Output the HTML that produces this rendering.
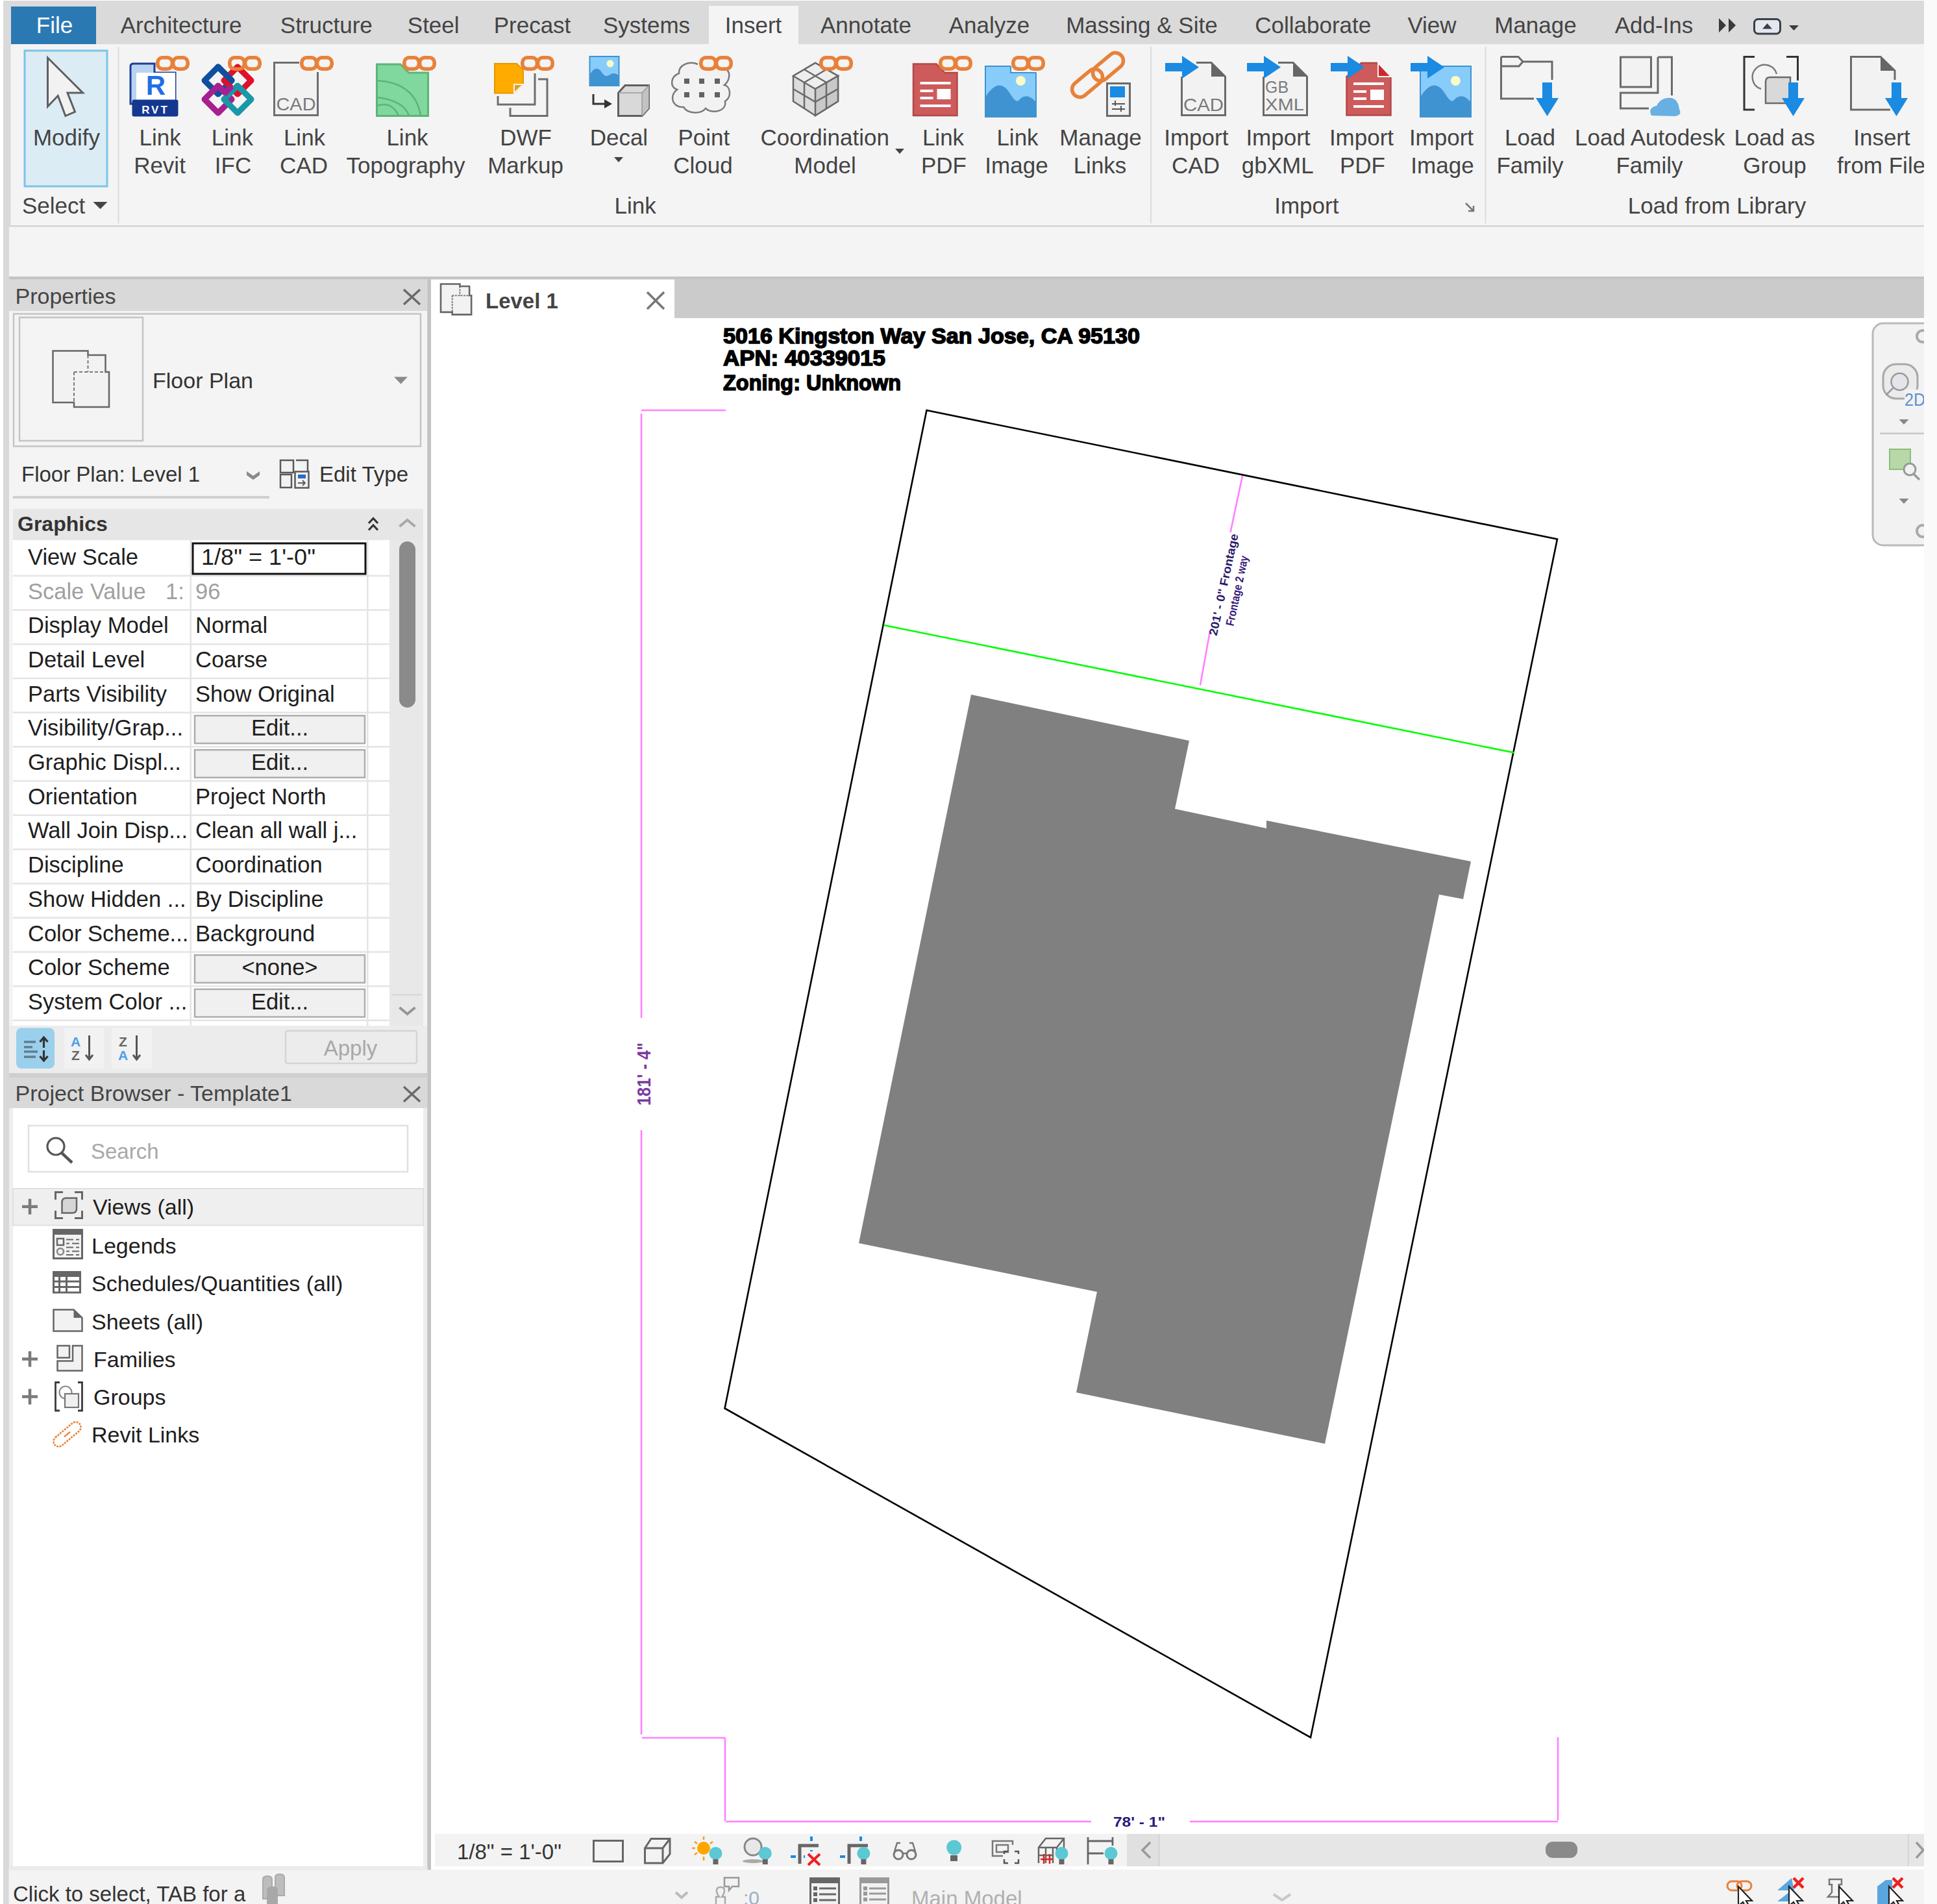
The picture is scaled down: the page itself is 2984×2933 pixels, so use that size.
<!DOCTYPE html>
<html><head><meta charset="utf-8"><style>
html,body{margin:0;padding:0;width:2984px;height:2933px;overflow:hidden;background:#fff}
svg{display:block;font-family:"Liberation Sans",sans-serif}
</style></head><body>
<svg width="2984" height="2933" viewBox="0 0 2984 2933">
<rect x="0" y="0" width="2984" height="2933" fill="#ffffff" />
<rect x="2964" y="0" width="20" height="2933" fill="#fafafa" />
<rect x="5" y="1" width="2959" height="2932" fill="#d9d9d9" />
<rect x="5" y="1" width="2959" height="67" fill="#dadada" />
<rect x="17" y="10" width="131" height="58" fill="#2b79b3" />
<rect x="1092" y="9" width="138" height="60" fill="#f4f4f4" />
<text x="84" y="50.5" font-size="35" fill="#ffffff" text-anchor="middle" font-weight="normal" >File</text>
<text x="279.0" y="50.5" font-size="35" fill="#444444" text-anchor="middle" font-weight="normal" >Architecture</text>
<text x="502.8" y="50.5" font-size="35" fill="#444444" text-anchor="middle" font-weight="normal" >Structure</text>
<text x="667.7" y="50.5" font-size="35" fill="#444444" text-anchor="middle" font-weight="normal" >Steel</text>
<text x="820.0" y="50.5" font-size="35" fill="#444444" text-anchor="middle" font-weight="normal" >Precast</text>
<text x="996.0" y="50.5" font-size="35" fill="#444444" text-anchor="middle" font-weight="normal" >Systems</text>
<text x="1160.5500000000002" y="50.5" font-size="35" fill="#444444" text-anchor="middle" font-weight="normal" >Insert</text>
<text x="1334.0" y="50.5" font-size="35" fill="#444444" text-anchor="middle" font-weight="normal" >Annotate</text>
<text x="1524.0" y="50.5" font-size="35" fill="#444444" text-anchor="middle" font-weight="normal" >Analyze</text>
<text x="1758.9" y="50.5" font-size="35" fill="#444444" text-anchor="middle" font-weight="normal" >Massing &amp; Site</text>
<text x="2022.7" y="50.5" font-size="35" fill="#444444" text-anchor="middle" font-weight="normal" >Collaborate</text>
<text x="2206.0" y="50.5" font-size="35" fill="#444444" text-anchor="middle" font-weight="normal" >View</text>
<text x="2365.5" y="50.5" font-size="35" fill="#444444" text-anchor="middle" font-weight="normal" >Manage</text>
<text x="2548.0" y="50.5" font-size="35" fill="#444444" text-anchor="middle" font-weight="normal" >Add-Ins</text>
<path d="M2648,28 L2659,39 L2648,50 Z M2663,28 L2674,39 L2663,50 Z" fill="#3a3a3a"/>
<rect x="2702.5" y="29.5" width="40" height="22.5" fill="#e4e7ee" stroke="#3a3f48" stroke-width="3" rx="6" />
<path d="M2715,44.5 L2730,44.5 L2722.5,36 Z" fill="#3a3f48"/>
<path d="M2756.0,39.0 L2771.0,39.0 L2763.5,47.0 Z" fill="#3a3a3a"/>
<rect x="16.5" y="68" width="2947.5" height="279.5" fill="#f4f4f4" />
<rect x="16.5" y="347" width="2947.5" height="2.5" fill="#d4d4d4" />
<rect x="181.5" y="72" width="2" height="272" fill="#dcdcdc" />
<rect x="1772" y="72" width="2" height="272" fill="#dcdcdc" />
<rect x="2287.5" y="72" width="2" height="272" fill="#dcdcdc" />
<rect x="38" y="78" width="127" height="209" fill="#dcecf5" stroke="#7cc4e8" stroke-width="3" />
<text x="102.5" y="223.7" font-size="35" fill="#444444" text-anchor="middle" font-weight="normal" >Modify</text>
<text x="246.7" y="223.7" font-size="35" fill="#444444" text-anchor="middle" font-weight="normal" >Link</text>
<text x="246" y="267" font-size="35" fill="#444444" text-anchor="middle" font-weight="normal" >Revit</text>
<text x="357.8" y="223.7" font-size="35" fill="#444444" text-anchor="middle" font-weight="normal" >Link</text>
<text x="359" y="267" font-size="35" fill="#444444" text-anchor="middle" font-weight="normal" >IFC</text>
<text x="469" y="223.7" font-size="35" fill="#444444" text-anchor="middle" font-weight="normal" >Link</text>
<text x="468" y="267" font-size="35" fill="#444444" text-anchor="middle" font-weight="normal" >CAD</text>
<text x="627.5" y="223.7" font-size="35" fill="#444444" text-anchor="middle" font-weight="normal" >Link</text>
<text x="625" y="267" font-size="35" fill="#444444" text-anchor="middle" font-weight="normal" >Topography</text>
<text x="810" y="223.7" font-size="35" fill="#444444" text-anchor="middle" font-weight="normal" >DWF</text>
<text x="809.5" y="267" font-size="35" fill="#444444" text-anchor="middle" font-weight="normal" >Markup</text>
<text x="953.4" y="223.7" font-size="35" fill="#444444" text-anchor="middle" font-weight="normal" >Decal</text>
<path d="M946.0,242.0 L960.0,242.0 L953,250.0 Z" fill="#444444"/>
<text x="1084.4" y="223.7" font-size="35" fill="#444444" text-anchor="middle" font-weight="normal" >Point</text>
<text x="1083" y="267" font-size="35" fill="#444444" text-anchor="middle" font-weight="normal" >Cloud</text>
<text x="1270.7" y="223.7" font-size="35" fill="#444444" text-anchor="middle" font-weight="normal" >Coordination</text>
<text x="1271" y="267" font-size="35" fill="#444444" text-anchor="middle" font-weight="normal" >Model</text>
<path d="M1379.0,229.0 L1393.0,229.0 L1386,237.0 Z" fill="#444444"/>
<text x="1453" y="223.7" font-size="35" fill="#444444" text-anchor="middle" font-weight="normal" >Link</text>
<text x="1454" y="267" font-size="35" fill="#444444" text-anchor="middle" font-weight="normal" >PDF</text>
<text x="1567.5" y="223.7" font-size="35" fill="#444444" text-anchor="middle" font-weight="normal" >Link</text>
<text x="1566" y="267" font-size="35" fill="#444444" text-anchor="middle" font-weight="normal" >Image</text>
<text x="1695.6" y="223.7" font-size="35" fill="#444444" text-anchor="middle" font-weight="normal" >Manage</text>
<text x="1694.5" y="267" font-size="35" fill="#444444" text-anchor="middle" font-weight="normal" >Links</text>
<text x="1842.8" y="223.7" font-size="35" fill="#444444" text-anchor="middle" font-weight="normal" >Import</text>
<text x="1842" y="267" font-size="35" fill="#444444" text-anchor="middle" font-weight="normal" >CAD</text>
<text x="1969" y="223.7" font-size="35" fill="#444444" text-anchor="middle" font-weight="normal" >Import</text>
<text x="1968.3" y="267" font-size="35" fill="#444444" text-anchor="middle" font-weight="normal" >gbXML</text>
<text x="2097.5" y="223.7" font-size="35" fill="#444444" text-anchor="middle" font-weight="normal" >Import</text>
<text x="2099" y="267" font-size="35" fill="#444444" text-anchor="middle" font-weight="normal" >PDF</text>
<text x="2220.5" y="223.7" font-size="35" fill="#444444" text-anchor="middle" font-weight="normal" >Import</text>
<text x="2222" y="267" font-size="35" fill="#444444" text-anchor="middle" font-weight="normal" >Image</text>
<text x="2357" y="223.7" font-size="35" fill="#444444" text-anchor="middle" font-weight="normal" >Load</text>
<text x="2357" y="267" font-size="35" fill="#444444" text-anchor="middle" font-weight="normal" >Family</text>
<text x="2541.8" y="223.7" font-size="35" fill="#444444" text-anchor="middle" font-weight="normal" >Load Autodesk</text>
<text x="2541" y="267" font-size="35" fill="#444444" text-anchor="middle" font-weight="normal" >Family</text>
<text x="2733.7" y="223.7" font-size="35" fill="#444444" text-anchor="middle" font-weight="normal" >Load as</text>
<text x="2734" y="267" font-size="35" fill="#444444" text-anchor="middle" font-weight="normal" >Group</text>
<text x="2899" y="223.7" font-size="35" fill="#444444" text-anchor="middle" font-weight="normal" >Insert</text>
<text x="2830" y="267" font-size="35" fill="#444444" text-anchor="start" font-weight="normal" >from File</text>
<text x="34" y="329" font-size="35" fill="#444444" text-anchor="start" font-weight="normal" >Select</text>
<path d="M143.5,311.0 L165.5,311.0 L154.5,322.0 Z" fill="#444444"/>
<text x="978.7" y="329" font-size="35" fill="#444444" text-anchor="middle" font-weight="normal" >Link</text>
<text x="2012.8" y="329" font-size="35" fill="#444444" text-anchor="middle" font-weight="normal" >Import</text>
<text x="2645" y="329" font-size="35" fill="#444444" text-anchor="middle" font-weight="normal" >Load from Library</text>
<path d="M2258,313 L2270,325 M2262,325 L2270,325 L2270,317" stroke="#777" stroke-width="2.5" fill="none"/>
<path d="M73.5,89 L73.5,164 L89.3,147.5 L100.8,178.6 L115.5,172.3 L104,143 L127.6,143 Z" fill="#f2f2f2" stroke="#606060" stroke-width="3" stroke-linejoin="miter"/>
<path d="M201,102 Q201,98 206,98 L238,98 L238,112 L270,112 L270,160 L201,160 Z" fill="#b9d3f3" stroke="#1c3f94" stroke-width="3"/>
<rect x="210" y="112" width="60" height="44" fill="#ffffff" />
<rect x="203.5" y="153.5" width="71" height="26" fill="#14388f" rx="3" />
<text x="240" y="146" font-size="42" fill="#1f6fe5" text-anchor="middle" font-weight="bold" >R</text>
<text x="239.5" y="174.5" font-size="17" fill="#ffffff" text-anchor="middle" font-weight="bold" letter-spacing="3">RVT</text>
<rect x="242.8" y="88.8" width="22.6" height="17.4" rx="7.5" fill="none" stroke="#e8813a" stroke-width="5.6"/>
<rect x="266.6" y="88.8" width="22.6" height="17.4" rx="7.5" fill="none" stroke="#e8813a" stroke-width="5.6"/>
<path d="M336,103 L357,124 L336,145 L315,124 Z" fill="none" stroke="#0f4fa0" stroke-width="9" stroke-linejoin="round"/>
<path d="M366,103 L387,124 L366,145 L345,124 Z" fill="none" stroke="#e0102a" stroke-width="9" stroke-linejoin="round"/>
<path d="M336,132 L357,153 L336,174 L315,153 Z" fill="none" stroke="#a81f90" stroke-width="9" stroke-linejoin="round"/>
<path d="M366,132 L387,153 L366,174 L345,153 Z" fill="none" stroke="#1898a8" stroke-width="9" stroke-linejoin="round"/>
<path d="M336,103 L357,124" stroke="#0f4fa0" stroke-width="9" stroke-linecap="round"/>
<path d="M345,145 L357,133" stroke="#a81f90" stroke-width="9"/>
<rect x="353.8" y="88.8" width="22.6" height="17.4" rx="7.5" fill="none" stroke="#e8813a" stroke-width="5.6"/>
<rect x="377.6" y="88.8" width="22.6" height="17.4" rx="7.5" fill="none" stroke="#e8813a" stroke-width="5.6"/>
<path d="M461,96.5 L422.5,96.5 L422.5,177.5 L489.5,177.5 L489.5,111" fill="#f2f2f2" stroke="#6e6e6e" stroke-width="3"/>
<text x="456" y="170" font-size="28" fill="#7a7a7a" text-anchor="middle" font-weight="normal" textLength="61" lengthAdjust="spacingAndGlyphs">CAD</text>
<rect x="464.8" y="88.8" width="22.6" height="17.4" rx="7.5" fill="none" stroke="#e8813a" stroke-width="5.6"/>
<rect x="488.6" y="88.8" width="22.6" height="17.4" rx="7.5" fill="none" stroke="#e8813a" stroke-width="5.6"/>
<path d="M580.5,99 L617,99 L630,112 L659.5,112 L659.5,178.5 L580.5,178.5 Z" fill="#80d89e" stroke="#5cb479" stroke-width="3"/>
<path d="M581,124 Q640,128 648,178 M581,150 Q622,155 630,178 M581,163 Q603,155 614,178" fill="none" stroke="#5cb479" stroke-width="2.5"/>
<rect x="622.8" y="88.8" width="22.6" height="17.4" rx="7.5" fill="none" stroke="#e8813a" stroke-width="5.6"/>
<rect x="646.6" y="88.8" width="22.6" height="17.4" rx="7.5" fill="none" stroke="#e8813a" stroke-width="5.6"/>
<path d="M767,148 L767,161 L824,161 L824,113" fill="none" stroke="#6e6e6e" stroke-width="3"/>
<path d="M786,166 L786,178.5 L843,178.5 L843,122 L829,122" fill="none" stroke="#6e6e6e" stroke-width="3"/>
<path d="M762,98 L796,98 L806,108 L806,130 L792,143.5 L762,143.5 Z" fill="#ffab00" stroke="#e39a00" stroke-width="2"/>
<path d="M792,130 L806,130 L792,143.5 Z" fill="#e0a020" stroke="#f4f4f4" stroke-width="2"/>
<rect x="804.8" y="88.8" width="22.6" height="17.4" rx="7.5" fill="none" stroke="#e8813a" stroke-width="5.6"/>
<rect x="828.6" y="88.8" width="22.6" height="17.4" rx="7.5" fill="none" stroke="#e8813a" stroke-width="5.6"/>
<rect x="908.5" y="87" width="45" height="45" fill="#88ccfb" stroke="#3f93d0" stroke-width="2" />
<path d="M909,114 Q918,100 926,110 Q932,120 938,116 Q945,110 953,116 L953,131.5 L909,131.5 Z" fill="#3f93d0"/>
<circle cx="940" cy="98" r="5.5" fill="#fbfbc8"/>
<path d="M914,145 L914,160 L933,160" fill="none" stroke="#333" stroke-width="3"/>
<path d="M931,153 L943,160 L931,167 Z" fill="#333"/>
<path d="M952.5,143 L963,131.5 L999.5,131.5 L999.5,167 L989,178.5 L952.5,178.5 Z" fill="#d9d9d9" stroke="#5f5f5f" stroke-width="3"/>
<path d="M989,143 L999.5,131.5 L999.5,167 L989,178.5 Z" fill="#c2c2c2"/>
<path d="M952.5,143 L989,143 L999.5,131.5 M989,143 L989,178.5" fill="none" stroke="#9a9a9a" stroke-width="1.5"/>
<path d="M1075,99 C1062,93 1045,100 1046,113 C1032,118 1032,135 1043,138 C1030,148 1036,166 1053,165 C1060,176 1080,176 1087,167 C1096,176 1120,172 1117,156 C1128,149 1125,133 1116,131 C1126,122 1124,111 1120,108" fill="#f2f2f2" stroke="#7a7a7a" stroke-width="2.5"/>
<rect x="1054" y="121" width="8" height="8" fill="#626262" />
<rect x="1054" y="142" width="8" height="8" fill="#626262" />
<rect x="1077" y="121" width="8" height="8" fill="#626262" />
<rect x="1077" y="142" width="8" height="8" fill="#626262" />
<rect x="1101" y="121" width="8" height="8" fill="#626262" />
<rect x="1101" y="142" width="8" height="8" fill="#626262" />
<rect x="1079.8" y="88.8" width="22.6" height="17.4" rx="7.5" fill="none" stroke="#e8813a" stroke-width="5.6"/>
<rect x="1103.6" y="88.8" width="22.6" height="17.4" rx="7.5" fill="none" stroke="#e8813a" stroke-width="5.6"/>
<path d="M1222,117 L1256,97 L1291,117 L1291,156 L1256,178 L1222,156 Z" fill="#dcdcdc" stroke="#6a6a6a" stroke-width="2.5"/>
<path d="M1222,117 L1256,137 L1291,117 L1256,97 Z" fill="#eeeeee" stroke="#6a6a6a" stroke-width="2.5"/>
<path d="M1256,137 L1291,117 L1291,156 L1256,178 Z" fill="#c9c9c9" stroke="#6a6a6a" stroke-width="2.5"/>
<path d="M1239,107 L1273,127 M1273,107 L1239,127 M1239,127 L1239,168 M1273,127 L1273,168 M1222,137 L1256,157 L1291,137" fill="none" stroke="#6a6a6a" stroke-width="2.5"/>
<rect x="1264.8" y="88.8" width="22.6" height="17.4" rx="7.5" fill="none" stroke="#e8813a" stroke-width="5.6"/>
<rect x="1288.6" y="88.8" width="22.6" height="17.4" rx="7.5" fill="none" stroke="#e8813a" stroke-width="5.6"/>
<path d="M1407.0,98.5 L1442.5,98.5 L1455.5,112 L1474.5,112 L1474.5,178 L1407.0,178 Z" fill="#cd5b5b" stroke="#b24848" stroke-width="2.5"/>
<rect x="1417.5" y="126" width="47" height="4" fill="#ffffff" />
<rect x="1417.5" y="138" width="20" height="4" fill="#ffffff" />
<rect x="1417.5" y="149" width="20" height="4" fill="#ffffff" />
<rect x="1443.5" y="137" width="21" height="16" fill="#ffffff" />
<rect x="1417.5" y="161" width="47" height="4" fill="#ffffff" />
<rect x="1448.8" y="88.8" width="22.6" height="17.4" rx="7.5" fill="none" stroke="#e8813a" stroke-width="5.6"/>
<rect x="1472.6" y="88.8" width="22.6" height="17.4" rx="7.5" fill="none" stroke="#e8813a" stroke-width="5.6"/>
<rect x="1518" y="102" width="78" height="78" fill="#88ccfb" stroke="#3f93d0" stroke-width="2"/>
<path d="M1518,149.36 Q1538.84,116.6 1556.0,143.9 Q1563.8,157.16 1568.48,155.6 Q1580.96,140.0 1596,157.16 L1596,180 L1518,180 Z" fill="#3f93d0"/>
<circle cx="1572.38" cy="124.4" r="7.5" fill="#fbfbc8"/>
<rect x="1557" y="99" width="40" height="12.5" fill="#f4f4f4" />
<path d="M1557,102 L1557,112 L1596,112" fill="none" stroke="#3f93d0" stroke-width="2"/>
<rect x="1560.8" y="88.8" width="22.6" height="17.4" rx="7.5" fill="none" stroke="#e8813a" stroke-width="5.6"/>
<rect x="1584.6" y="88.8" width="22.6" height="17.4" rx="7.5" fill="none" stroke="#e8813a" stroke-width="5.6"/>
<g transform="translate(1675,128) rotate(-40)"><rect x="-27" y="-12" width="54" height="24" rx="12" fill="none" stroke="#e8813a" stroke-width="5.5"/></g>
<g transform="translate(1707,103) rotate(-40)"><rect x="-27" y="-12" width="54" height="24" rx="12" fill="none" stroke="#e8813a" stroke-width="5.5"/></g>
<rect x="1705.5" y="128.5" width="35" height="50" fill="#f2f2f2" stroke="#6a6a6a" stroke-width="3" />
<rect x="1710" y="133" width="23" height="17" fill="#1a8ae2" />
<path d="M1713,160 L1733,160 M1713,168 L1733,168 M1718,155 L1718,163 M1727,163 L1727,172" stroke="#555" stroke-width="2"/>
<path d="M1820.5,118 L1820.5,177.5 L1887.5,177.5 L1887.5,118 L1866,96.5 L1843,96.5" fill="#f2f2f2" stroke="#6a6a6a" stroke-width="3"/>
<path d="M1866,96.5 L1887.5,118 L1866,118 Z" fill="#666666"/>
<text x="1854" y="171" font-size="28" fill="#7a7a7a" text-anchor="middle" font-weight="normal" textLength="62" lengthAdjust="spacingAndGlyphs">CAD</text>
<path d="M1795,97 L1821,97 L1821,86 L1847,103.5 L1821,121 L1821,110 L1795,110 Z" fill="#1a8ae2"/>
<path d="M1946.5,118 L1946.5,177.5 L2013.5,177.5 L2013.5,118 L1992,96.5 L1969,96.5" fill="#f2f2f2" stroke="#6a6a6a" stroke-width="3"/>
<path d="M1992,96.5 L2013.5,118 L1992,118 Z" fill="#666666"/>
<text x="1949" y="143" font-size="25" fill="#7a7a7a" text-anchor="start" font-weight="normal" textLength="36" lengthAdjust="spacingAndGlyphs">GB</text>
<text x="1949" y="170" font-size="25" fill="#7a7a7a" text-anchor="start" font-weight="normal" textLength="60" lengthAdjust="spacingAndGlyphs">XML</text>
<path d="M1921,97 L1947,97 L1947,86 L1973,103.5 L1947,121 L1947,110 L1921,110 Z" fill="#1a8ae2"/>
<path d="M2074.5,118 L2074.5,177.5 L2142.5,177.5 L2142.5,118 L2121,97 L2097,97 Z" fill="#cd5b5b" stroke="#b24848" stroke-width="2.5"/>
<path d="M2123,97 L2143,118 L2123,118 Z" fill="#cc2a2a" stroke="#f4f4f4" stroke-width="2"/>
<rect x="2085" y="127" width="47" height="4" fill="#ffffff" />
<rect x="2085" y="139" width="20" height="4" fill="#ffffff" />
<rect x="2085" y="150" width="20" height="4" fill="#ffffff" />
<rect x="2111" y="138" width="21" height="16" fill="#ffffff" />
<rect x="2085" y="162" width="47" height="4" fill="#ffffff" />
<path d="M2050,97 L2076,97 L2076,86 L2102,103.5 L2076,121 L2076,110 L2050,110 Z" fill="#1a8ae2"/>
<rect x="2188" y="102" width="78" height="78" fill="#88ccfb" stroke="#3f93d0" stroke-width="2"/>
<path d="M2188,149.36 Q2208.84,116.6 2226.0,143.9 Q2233.8,157.16 2238.48,155.6 Q2250.96,140.0 2266,157.16 L2266,180 L2188,180 Z" fill="#3f93d0"/>
<circle cx="2242.38" cy="124.4" r="7.5" fill="#fbfbc8"/>
<path d="M2173,97 L2199,97 L2199,86 L2225,103.5 L2199,121 L2199,110 L2173,110 Z" fill="#1a8ae2"/>
<path d="M2312.5,87.5 L2339,87.5 L2346,95 L2391,95 L2391,123 M2312.5,87.5 L2312.5,152 L2363,152 M2312.5,102 L2340,102 L2346,95" fill="none" stroke="#6a6a6a" stroke-width="3"/>
<path d="M2376,127 L2391,127 L2391,151 L2401,151 L2383.5,179 L2366,151 L2376,151 Z" fill="#1a8ae2"/>
<rect x="2496.5" y="88" width="47" height="46" fill="#f2f2f2" stroke="#6a6a6a" stroke-width="3" />
<path d="M2554,88 L2575.5,88 L2575.5,147 M2554,88 L2554,143 L2496.5,143 L2496.5,167 L2540,167" fill="none" stroke="#6a6a6a" stroke-width="3"/>
<path d="M2544,178 Q2538,166 2552,163 Q2559,149 2576,151 Q2586,155 2587,168 Q2592,178 2580,179 Z" fill="#68afe3"/>
<path d="M2703,87.5 L2687,87.5 L2687,169 L2703,169 M2752,87.5 L2769.5,87.5 L2769.5,124" fill="none" stroke="#333" stroke-width="3"/>
<path d="M2713,137 A19,19 0 1 1 2737,114" fill="none" stroke="#7a7a7a" stroke-width="2.5"/>
<path d="M2720,159 L2720,126 Q2720,119 2727,119 L2758,119 L2758,159 Z" fill="#d9d9d9" stroke="#6a6a6a" stroke-width="2.5"/>
<path d="M2755,127 L2770,127 L2770,151 L2780,151 L2762.5,179 L2745,151 L2755,151 Z" fill="#1a8ae2"/>
<path d="M2919,123 L2919,109 L2897,87.5 L2851.5,87.5 L2851.5,169 L2912,169" fill="#f2f2f2" stroke="#6a6a6a" stroke-width="3"/>
<path d="M2897,87.5 L2919,109 L2897,109 Z" fill="#666"/>
<path d="M2914,127 L2929,127 L2929,151 L2939,151 L2921.5,179 L2904,151 L2914,151 Z" fill="#1a8ae2"/>
<rect x="14" y="349.5" width="2950" height="76.5" fill="#f4f4f4" />
<rect x="14" y="426" width="2950" height="4.5" fill="#c3c3c3" />
<rect x="14" y="430.5" width="644" height="48.5" fill="#d9d9d9" />
<text x="23.5" y="468" font-size="34" fill="#444444" text-anchor="start" font-weight="normal" >Properties</text>
<path d="M622,446 L647,469 M647,446 L622,469" stroke="#6a6a6a" stroke-width="3.5"/>
<rect x="14" y="479" width="644" height="1174" fill="#f4f4f4" />
<rect x="21" y="483.5" width="627" height="204" fill="#f4f4f4" stroke="#c4c4c4" stroke-width="2.5" />
<rect x="30" y="489" width="190" height="190" fill="#f4f4f4" stroke="#c4c4c4" stroke-width="2.5" />
<text x="235" y="598" font-size="34" fill="#333333" text-anchor="start" font-weight="normal" >Floor Plan</text>
<path d="M607.0,580.5 L628.0,580.5 L617.5,591.5 Z" fill="#8a8a8a"/>
<text x="33" y="742" font-size="33" fill="#333333" text-anchor="start" font-weight="normal" >Floor Plan: Level 1</text>
<path d="M380,726 L390,733 L400,726 L400,732 L390,739 L380,732 Z" fill="#8a8a8a"/>
<rect x="20" y="764" width="395" height="4" fill="#d0d0d0" />
<text x="492" y="742" font-size="33" fill="#333333" text-anchor="start" font-weight="normal" >Edit Type</text>
<rect x="20" y="784" width="632" height="48" fill="#e6e6e6" />
<text x="27" y="818" font-size="32" fill="#333333" text-anchor="start" font-weight="bold" >Graphics</text>
<path d="M568,806 L575,798.5 L582,806 M568,816.5 L575,809 L582,816.5" stroke="#333" stroke-width="3.2" fill="none"/>
<path d="M615.5,811 L627.5,801 L639.5,811" stroke="#a8a8a8" stroke-width="4" fill="none"/>
<rect x="20" y="832" width="580" height="748" fill="#ffffff" />
<rect x="600" y="832" width="52" height="748" fill="#e8e8e8" />
<rect x="20" y="885.7" width="580" height="2.5" fill="#e4e4e4" />
<rect x="20" y="938.38" width="580" height="2.5" fill="#e4e4e4" />
<rect x="20" y="991.0600000000001" width="580" height="2.5" fill="#e4e4e4" />
<rect x="20" y="1043.74" width="580" height="2.5" fill="#e4e4e4" />
<rect x="20" y="1096.42" width="580" height="2.5" fill="#e4e4e4" />
<rect x="20" y="1149.1" width="580" height="2.5" fill="#e4e4e4" />
<rect x="20" y="1201.78" width="580" height="2.5" fill="#e4e4e4" />
<rect x="20" y="1254.46" width="580" height="2.5" fill="#e4e4e4" />
<rect x="20" y="1307.14" width="580" height="2.5" fill="#e4e4e4" />
<rect x="20" y="1359.8200000000002" width="580" height="2.5" fill="#e4e4e4" />
<rect x="20" y="1412.5" width="580" height="2.5" fill="#e4e4e4" />
<rect x="20" y="1465.18" width="580" height="2.5" fill="#e4e4e4" />
<rect x="20" y="1517.8600000000001" width="580" height="2.5" fill="#e4e4e4" />
<rect x="20" y="1570.54" width="580" height="2.5" fill="#e4e4e4" />
<rect x="292.5" y="832" width="2.5" height="748" fill="#e4e4e4" />
<rect x="565" y="832" width="2.5" height="748" fill="#e4e4e4" />
<text x="43" y="870" font-size="34.5" fill="#1e1e1e" text-anchor="start" font-weight="normal" >View Scale</text>
<rect x="297" y="837" width="266" height="47" fill="#ffffff" stroke="#111111" stroke-width="3" />
<text x="310" y="870" font-size="34.5" fill="#1e1e1e" text-anchor="start" font-weight="normal" textLength="176" lengthAdjust="spacingAndGlyphs">1/8" = 1'-0"</text>
<text x="43" y="922.7" font-size="34.5" fill="#a0a0a0" text-anchor="start" font-weight="normal" >Scale Value</text>
<text x="255" y="922.7" font-size="34.5" fill="#a0a0a0" text-anchor="start" font-weight="normal" >1:</text>
<text x="301" y="922.7" font-size="34.5" fill="#a0a0a0" text-anchor="start" font-weight="normal" >96</text>
<text x="43" y="975.38" font-size="34.5" fill="#1e1e1e" text-anchor="start" font-weight="normal" >Display Model</text>
<text x="301" y="975.38" font-size="34.5" fill="#1e1e1e" text-anchor="start" font-weight="normal" >Normal</text>
<text x="43" y="1028.06" font-size="34.5" fill="#1e1e1e" text-anchor="start" font-weight="normal" >Detail Level</text>
<text x="301" y="1028.06" font-size="34.5" fill="#1e1e1e" text-anchor="start" font-weight="normal" >Coarse</text>
<text x="43" y="1080.74" font-size="34.5" fill="#1e1e1e" text-anchor="start" font-weight="normal" >Parts Visibility</text>
<text x="301" y="1080.74" font-size="34.5" fill="#1e1e1e" text-anchor="start" font-weight="normal" >Show Original</text>
<text x="43" y="1133.42" font-size="34.5" fill="#1e1e1e" text-anchor="start" font-weight="normal" >Visibility/Grap...</text>
<rect x="300" y="1102.42" width="262" height="42.679999999999836" fill="#f0f0f0" stroke="#adadad" stroke-width="2.5" />
<text x="431" y="1133.42" font-size="34.5" fill="#1e1e1e" text-anchor="middle" font-weight="normal" >Edit...</text>
<text x="43" y="1186.1" font-size="34.5" fill="#1e1e1e" text-anchor="start" font-weight="normal" >Graphic Displ...</text>
<rect x="300" y="1155.1" width="262" height="42.680000000000064" fill="#f0f0f0" stroke="#adadad" stroke-width="2.5" />
<text x="431" y="1186.1" font-size="34.5" fill="#1e1e1e" text-anchor="middle" font-weight="normal" >Edit...</text>
<text x="43" y="1238.78" font-size="34.5" fill="#1e1e1e" text-anchor="start" font-weight="normal" >Orientation</text>
<text x="301" y="1238.78" font-size="34.5" fill="#1e1e1e" text-anchor="start" font-weight="normal" >Project North</text>
<text x="43" y="1291.46" font-size="34.5" fill="#1e1e1e" text-anchor="start" font-weight="normal" >Wall Join Disp...</text>
<text x="301" y="1291.46" font-size="34.5" fill="#1e1e1e" text-anchor="start" font-weight="normal" >Clean all wall j...</text>
<text x="43" y="1344.14" font-size="34.5" fill="#1e1e1e" text-anchor="start" font-weight="normal" >Discipline</text>
<text x="301" y="1344.14" font-size="34.5" fill="#1e1e1e" text-anchor="start" font-weight="normal" >Coordination</text>
<text x="43" y="1396.8200000000002" font-size="34.5" fill="#1e1e1e" text-anchor="start" font-weight="normal" >Show Hidden ...</text>
<text x="301" y="1396.8200000000002" font-size="34.5" fill="#1e1e1e" text-anchor="start" font-weight="normal" >By Discipline</text>
<text x="43" y="1449.5" font-size="34.5" fill="#1e1e1e" text-anchor="start" font-weight="normal" >Color Scheme...</text>
<text x="301" y="1449.5" font-size="34.5" fill="#1e1e1e" text-anchor="start" font-weight="normal" >Background</text>
<text x="43" y="1502.18" font-size="34.5" fill="#1e1e1e" text-anchor="start" font-weight="normal" >Color Scheme</text>
<rect x="300" y="1471.18" width="262" height="42.680000000000064" fill="#f0f0f0" stroke="#adadad" stroke-width="2.5" />
<text x="431" y="1502.18" font-size="34.5" fill="#1e1e1e" text-anchor="middle" font-weight="normal" >&lt;none&gt;</text>
<text x="43" y="1554.8600000000001" font-size="34.5" fill="#1e1e1e" text-anchor="start" font-weight="normal" >System Color ...</text>
<rect x="300" y="1523.8600000000001" width="262" height="42.679999999999836" fill="#f0f0f0" stroke="#adadad" stroke-width="2.5" />
<text x="431" y="1554.8600000000001" font-size="34.5" fill="#1e1e1e" text-anchor="middle" font-weight="normal" >Edit...</text>
<rect x="615" y="834" width="25" height="256" fill="#8a8a8a" rx="12.5" />
<rect x="603" y="1531" width="46" height="2.5" fill="#d8d8d8" />
<path d="M615.5,1552 L627.5,1562 L639.5,1552" stroke="#959595" stroke-width="4" fill="none"/>
<rect x="14" y="1580" width="644" height="73" fill="#ececec" />
<rect x="25" y="1583.5" width="59" height="62.5" fill="#9bd0ec" rx="8" />
<rect x="99" y="1583.5" width="61" height="62.5" fill="#f2f2f2" />
<rect x="172" y="1583.5" width="62" height="62.5" fill="#f2f2f2" />
<rect x="440" y="1588" width="202" height="50" fill="none" stroke="#d4d4d4" stroke-width="2.5" rx="3" />
<text x="540" y="1626" font-size="33" fill="#a8a8a8" text-anchor="middle" font-weight="normal" >Apply</text>
<rect x="14" y="1653" width="644" height="7" fill="#cfcfcf" />
<rect x="14" y="1660" width="644" height="47" fill="#d9d9d9" />
<text x="23.5" y="1696" font-size="34" fill="#444444" text-anchor="start" font-weight="normal" >Project Browser - Template1</text>
<path d="M622,1674 L647,1697 M647,1674 L622,1697" stroke="#6a6a6a" stroke-width="3.5"/>
<rect x="14" y="1707" width="644" height="1168" fill="#eeeeee" />
<rect x="20" y="1707" width="632" height="1168" fill="#ffffff" />
<rect x="44" y="1734" width="584" height="71" fill="#ffffff" stroke="#e0e0e0" stroke-width="2.5" />
<text x="140" y="1784.6" font-size="33" fill="#a8a8a8" text-anchor="start" font-weight="normal" >Search</text>
<rect x="20" y="1831" width="632" height="56.5" fill="#efefef" stroke="#e0e0e0" stroke-width="2" />
<text x="143" y="1871.3" font-size="34" fill="#1e1e1e" text-anchor="start" font-weight="normal" >Views (all)</text>
<path d="M34,1858.8 L58,1858.8 M46,1846.8 L46,1870.8" stroke="#7a7a7a" stroke-width="4.5"/>
<text x="141" y="1931" font-size="34" fill="#1e1e1e" text-anchor="start" font-weight="normal" >Legends</text>
<text x="141" y="1988.7" font-size="34" fill="#1e1e1e" text-anchor="start" font-weight="normal" >Schedules/Quantities (all)</text>
<text x="141" y="2048.4" font-size="34" fill="#1e1e1e" text-anchor="start" font-weight="normal" >Sheets (all)</text>
<text x="144" y="2106" font-size="34" fill="#1e1e1e" text-anchor="start" font-weight="normal" >Families</text>
<path d="M34,2093.5 L58,2093.5 M46,2081.5 L46,2105.5" stroke="#7a7a7a" stroke-width="4.5"/>
<text x="144" y="2164" font-size="34" fill="#1e1e1e" text-anchor="start" font-weight="normal" >Groups</text>
<path d="M34,2151.5 L58,2151.5 M46,2139.5 L46,2163.5" stroke="#7a7a7a" stroke-width="4.5"/>
<text x="141" y="2222" font-size="34" fill="#1e1e1e" text-anchor="start" font-weight="normal" >Revit Links</text>
<rect x="658.5" y="430.5" width="5.5" height="2450" fill="#c3c3c3" />
<rect x="664" y="430.5" width="2300" height="59.5" fill="#cbcbcb" />
<rect x="664" y="430.5" width="375" height="59.5" fill="#ffffff" />
<text x="748" y="475.4" font-size="33" fill="#444444" text-anchor="start" font-weight="bold" >Level 1</text>
<path d="M997,450 L1023,476 M1023,450 L997,476" stroke="#777" stroke-width="3.5"/>
<rect x="664" y="490" width="2300" height="2335" fill="#ffffff" />
<text x="1114" y="528.8" font-size="34" fill="#000" text-anchor="start" font-weight="bold" stroke="#000" stroke-width="1.6" textLength="642" lengthAdjust="spacingAndGlyphs">5016 Kingston Way San Jose, CA 95130</text>
<text x="1114" y="563" font-size="34" fill="#000" text-anchor="start" font-weight="bold" stroke="#000" stroke-width="1.6" textLength="250" lengthAdjust="spacingAndGlyphs">APN: 40339015</text>
<text x="1114" y="601" font-size="34" fill="#000" text-anchor="start" font-weight="bold" stroke="#000" stroke-width="1.6" textLength="274" lengthAdjust="spacingAndGlyphs">Zoning: Unknown</text>
<path d="M1496,1070 L1832,1141 L1810,1246 L1951,1276 L1951,1264 L2266,1327 L2254,1385 L2217,1378 L2041,2224 L1658,2145 L1690,1990 L1323,1915 Z" fill="#808080"/>
<path d="M1427.5,632 L2399,830.5 L2019,2676.5 L1116.5,2169.5 Z" fill="none" stroke="#000" stroke-width="2.6" stroke-linejoin="miter"/>
<line x1="1361.5" y1="963" x2="2333" y2="1159.6" stroke="#00ff00" stroke-width="2.6" />
<path d="M988,632 L1118,632 M988,637 L988,1568 M988,1741 L988,2672 M989,2677 L1117,2677 M1117,2677 L1117,2805 M1118,2806 L1681,2806 M1833,2806 L2400,2806 M2400,2676 L2400,2804 M1914,733 L1895.5,820 M1864,972 L1849,1055.5" stroke="#ff80ff" stroke-width="2.6" fill="none"/>
<text x="1715" y="2813.5" font-size="22" fill="#2a1a7a" text-anchor="start" font-weight="bold" textLength="80" lengthAdjust="spacingAndGlyphs">78' - 1"</text>
<text x="0" y="0" font-size="30" font-weight="bold" fill="#7a3aa0" textLength="97" lengthAdjust="spacingAndGlyphs" transform="translate(1002,1703) rotate(-90)">181' - 4"</text>
<g transform="translate(1897,903) rotate(-78)"><text x="-80" y="-6" font-size="18" font-weight="bold" fill="#2a1a6a" textLength="160" lengthAdjust="spacingAndGlyphs">201' - 0" Frontage</text><text x="-60" y="16" font-size="18" font-weight="bold" fill="#3a1a7a" textLength="110" lengthAdjust="spacingAndGlyphs">Frontage 2 way</text></g>
<rect x="2885" y="498" width="120" height="342" rx="16" fill="#f2f2f2" stroke="#b9b9b9" stroke-width="3"/>
<rect x="2896" y="666.5" width="70" height="2.5" fill="#c8c8c8" />
<path d="M2925.5,646.0 L2940.5,646.0 L2933,654.0 Z" fill="#888"/>
<path d="M2925.5,768.0 L2940.5,768.0 L2933,776.0 Z" fill="#888"/>
<rect x="664" y="2825" width="2300" height="55.5" fill="#ffffff" />
<rect x="670" y="2825" width="1066" height="50" fill="#f3f3f3" />
<text x="704" y="2864" font-size="33" fill="#333333" text-anchor="start" font-weight="normal" >1/8" = 1'-0"</text>
<rect x="1736" y="2825" width="1228" height="50" fill="#e6e6e6" />
<rect x="1736" y="2825" width="50" height="50" fill="#e0e0e0" />
<rect x="1785" y="2825" width="1.5" height="50" fill="#d0d0d0" />
<path d="M1772,2838 L1760,2850 L1772,2862" stroke="#999" stroke-width="3.5" fill="none"/>
<rect x="2381" y="2837" width="49" height="25" fill="#8a8a8a" rx="11" />
<rect x="2939" y="2825" width="1.5" height="50" fill="#d0d0d0" />
<path d="M2952,2838 L2963,2850 L2952,2862" stroke="#999" stroke-width="3.5" fill="none"/>
<rect x="13.5" y="2880.5" width="2950.5" height="52.5" fill="#f3f3f3" />
<rect x="13.5" y="2875.3" width="645" height="5.3" fill="#ececec" />
<text x="20" y="2929" font-size="33" fill="#333333" text-anchor="start" font-weight="normal" >Click to select, TAB for a</text>
<text x="1404" y="2936" font-size="33" fill="#b0b0b0" text-anchor="start" font-weight="normal" >Main Model</text>
<path d="M81.5,540.5 L135.5,540.5 L135.5,547.0 L162.5,547.0 L162.5,573.0 L168.0,573.0 L168.0,627.0 L114.0,627.0 L114.0,620.0 L81.5,620.0 Z" fill="#f2f2f2" stroke="#666666" stroke-width="2.5"/>
<path d="M135.5,547.0 L135.5,573.0 M114.0,573.0 L162.5,573.0 M114.0,573.0 L114.0,620.0" fill="none" stroke="#7a7a7a" stroke-width="2.0" stroke-dasharray="5.0,3.0"/>
<path d="M679.0,437.5 L708.43,437.5 L708.43,441.0425 L723.145,441.0425 L723.145,455.2125 L726.1425,455.2125 L726.1425,484.6425 L696.7125,484.6425 L696.7125,480.8275 L679.0,480.8275 Z" fill="#f2f2f2" stroke="#666666" stroke-width="2.6"/>
<path d="M708.43,441.0425 L708.43,455.2125 M696.7125,455.2125 L723.145,455.2125 M696.7125,455.2125 L696.7125,480.8275" fill="none" stroke="#7a7a7a" stroke-width="2.08" stroke-dasharray="2.725,1.6350000000000002"/>
<path d="M432,709 L452,709 L452,728 L432,728 Z M456,709 L474,709 L474,727 M432,731 L449,731 L449,751 L432,751 Z" fill="#f2f2f2" stroke="#5a5a5a" stroke-width="2.5"/>
<rect x="454.5" y="726.5" width="21" height="25" fill="#f2f2f2" stroke="#5a5a5a" stroke-width="2.5" />
<rect x="459" y="731" width="12" height="6" fill="#2a6ac8" />
<path d="M459,744 L470,744 M466,740 L470,744 L466,748" stroke="#5a5a5a" stroke-width="1.8" fill="none"/>
<path d="M37,1605 L55,1605 M37,1613 L50,1613 M37,1620 L58,1620 M37,1628 L55,1628" stroke="#5f7f8f" stroke-width="3.5"/>
<path d="M67.5,1614 L67.5,1598 M61.5,1605 L67.5,1598 L73.5,1605 M67.5,1618 L67.5,1634 M61.5,1627 L67.5,1634 L73.5,1627" stroke="#333" stroke-width="3.2" fill="none"/>
<text x="116.5" y="1612" font-size="21" fill="#4aa0e8" text-anchor="middle" font-weight="bold" >A</text>
<text x="116.5" y="1633" font-size="21" fill="#666" text-anchor="middle" font-weight="bold" >Z</text>
<path d="M137.5,1595 L137.5,1632 M132,1625 L137.5,1632 L143,1625" stroke="#555" stroke-width="3" fill="none"/>
<text x="189.5" y="1612" font-size="21" fill="#666" text-anchor="middle" font-weight="bold" >Z</text>
<text x="189.5" y="1633" font-size="21" fill="#4aa0e8" text-anchor="middle" font-weight="bold" >A</text>
<path d="M210.5,1595 L210.5,1632 M205,1625 L210.5,1632 L216,1625" stroke="#555" stroke-width="3" fill="none"/>
<circle cx="86" cy="1766" r="13" fill="none" stroke="#555" stroke-width="3.2"/>
<path d="M95,1776 L111,1791" stroke="#555" stroke-width="4.5"/>
<path d="M85.5,1848 L85.5,1836.5 L97,1836.5 M115,1836.5 L126.5,1836.5 L126.5,1848 M85.5,1865 L85.5,1876.5 L97,1876.5 M115,1876.5 L126.5,1876.5 L126.5,1865" fill="none" stroke="#666" stroke-width="3"/>
<path d="M95.5,1852 Q95.5,1845.5 102,1845.5 L118,1845.5 L118,1862 Q118,1868.5 111,1868.5 L95.5,1868.5 Z" fill="#d6d6d6" stroke="#666" stroke-width="2.5"/>
<rect x="82.5" y="1894.5" width="44" height="44" fill="#f2f2f2" stroke="#666" stroke-width="3" />
<rect x="81" y="1893" width="47" height="9" fill="#666" />
<rect x="88" y="1908" width="10" height="10" fill="none" stroke="#666" stroke-width="2.5" />
<circle cx="93" cy="1928" r="5" fill="none" stroke="#888" stroke-width="2.5"/>
<path d="M102,1909.5 L113,1909.5 M117,1909.5 L122,1909.5 M102,1915.5 L107,1915.5 M111,1915.5 L122,1915.5 M102,1921.5 L113,1921.5 M117,1921.5 L122,1921.5 M102,1927.5 L107,1927.5 M111,1927.5 L122,1927.5 M102,1933 L113,1933 M117,1933 L122,1933" stroke="#666" stroke-width="2.2"/>
<rect x="81" y="1958" width="44" height="34.5" fill="#666" />
<rect x="84" y="1967" width="6" height="5.5" fill="#fff" />
<rect x="93" y="1967" width="8" height="5.5" fill="#fff" />
<rect x="104" y="1967" width="18" height="5.5" fill="#fff" />
<rect x="84" y="1975.5" width="6" height="5.5" fill="#fff" />
<rect x="93" y="1975.5" width="8" height="5.5" fill="#fff" />
<rect x="104" y="1975.5" width="18" height="5.5" fill="#fff" />
<rect x="84" y="1984" width="6" height="5.5" fill="#fff" />
<rect x="93" y="1984" width="8" height="5.5" fill="#fff" />
<rect x="104" y="1984" width="18" height="5.5" fill="#fff" />
<path d="M82.5,2017.5 L113.5,2017.5 L126.5,2030 L126.5,2050.5 L82.5,2050.5 Z" fill="#f2f2f2" stroke="#666" stroke-width="2.5"/>
<path d="M113.5,2017.5 L126.5,2030 L113.5,2030 Z" fill="#666"/>
<rect x="88.5" y="2073" width="18.5" height="18.5" fill="#f2f2f2" stroke="#666" stroke-width="2.5" />
<path d="M112,2073 L126.5,2073 L126.5,2111.5 L88.5,2111.5 L88.5,2096.5 L112,2096.5 Z" fill="#f2f2f2" stroke="#666" stroke-width="2.5"/>
<path d="M92,2129.5 L85.5,2129.5 L85.5,2173 L92,2173 M120,2129.5 L126.5,2129.5 L126.5,2173 L120,2173" fill="none" stroke="#3a3a3a" stroke-width="2.8"/>
<circle cx="101" cy="2145" r="9.5" fill="none" stroke="#8a8a8a" stroke-width="2.2"/>
<rect x="100" y="2147" width="21" height="21" fill="#f0f0f0" stroke="#777" stroke-width="2.2" />
<g transform="translate(103.5,2209.5) rotate(-40)"><rect x="-25" y="-8" width="50" height="16" rx="8" fill="none" stroke="#e8813a" stroke-width="2.6" stroke-dasharray="3,1.5"/><path d="M-6,0 L6,0" stroke="#e8813a" stroke-width="2.2"/></g>
<rect x="914.5" y="2835.5" width="45" height="32" fill="none" stroke="#666" stroke-width="3" />
<path d="M993.5,2847 L1003,2832.5 L1032,2832.5 L1032,2856 L1021,2870 L993.5,2870 Z M993.5,2847 L1021,2847 L1032,2832.5 M1021,2847 L1021,2870" fill="none" stroke="#666" stroke-width="3"/>
<path d="M1084,2829 L1084,2834 M1070,2837 L1074,2840 M1098,2837 L1094,2840 M1066,2847 L1071,2847 M1070,2857 L1074,2854 M1084,2860 L1084,2866" stroke="#f0a020" stroke-width="2.5"/>
<circle cx="1084" cy="2847" r="10" fill="#ffa500"/>
<circle cx="1102.5" cy="2855" r="10" fill="#5bc8d4"/>
<rect x="1098.5" y="2864" width="8" height="8" fill="#666" />
<circle cx="1160" cy="2845" r="13" fill="#e8e8e8" stroke="#888" stroke-width="3"/>
<ellipse cx="1160" cy="2867" rx="16" ry="3" fill="#aaa"/>
<circle cx="1178.8" cy="2855" r="10" fill="#5bc8d4"/>
<rect x="1174.8" y="2864" width="8" height="8" fill="#666" />
<path d="M1232,2871 L1232,2843 L1261,2843" fill="none" stroke="#666" stroke-width="5"/>
<path d="M1250,2829 L1250,2836 M1218,2860 L1226,2860 M1238,2860 L1240,2860 M1250,2850 L1250,2852" stroke="#1a8ae2" stroke-width="4"/>
<path d="M1245,2856 L1263,2873 M1263,2856 L1245,2873" stroke="#f02020" stroke-width="4"/>
<path d="M1308,2871 L1308,2843 L1337,2843" fill="none" stroke="#666" stroke-width="5"/>
<path d="M1326,2829 L1326,2836 M1294,2860 L1302,2860" stroke="#1a8ae2" stroke-width="4"/>
<circle cx="1330.4" cy="2855" r="10" fill="#5bc8d4"/>
<rect x="1326.4" y="2864" width="8" height="8" fill="#666" />
<circle cx="1384" cy="2857" r="7" fill="none" stroke="#777" stroke-width="3"/><circle cx="1404" cy="2857" r="7" fill="none" stroke="#777" stroke-width="3"/><path d="M1391,2855 L1397,2855 M1378,2852 L1382,2839 L1387,2839 M1410,2852 L1406,2839 L1401,2839" fill="none" stroke="#777" stroke-width="2.5"/>
<circle cx="1469.7" cy="2846" r="11.5" fill="#5bc8d4"/>
<rect x="1464" y="2858" width="11" height="9" fill="#666" />
<path d="M1560,2842 L1560,2836 L1529,2836 L1529,2859 L1545,2859 M1535,2842 L1553,2842 L1553,2853 L1535,2853 Z" fill="none" stroke="#777" stroke-width="2.5"/>
<path d="M1547,2864 L1547,2870 L1553,2870 M1563,2870 L1569,2870 L1569,2864 M1569,2856 L1569,2852 L1563,2852 M1547,2856 L1547,2852 L1553,2852" fill="none" stroke="#555" stroke-width="2.5"/>
<path d="M1600,2870 L1600,2846 L1611,2832 L1639,2832 L1639,2850 M1600,2846 L1628,2846 L1639,2832 M1611,2846 L1611,2870 M1622,2846 L1622,2870 M1600,2858 L1622,2858 M1628,2846 L1628,2854" fill="none" stroke="#666" stroke-width="2.5"/>
<path d="M1603,2864 L1622,2864 M1608,2856 L1608,2871 M1617,2856 L1617,2871" stroke="#e02020" stroke-width="2.5"/>
<circle cx="1635.5" cy="2855" r="10" fill="#5bc8d4"/>
<rect x="1631.5" y="2864" width="8" height="8" fill="#666" />
<path d="M1676,2830 L1676,2872 M1714,2830 L1714,2843 M1676,2836 L1714,2836 M1676,2855 L1700,2855" fill="none" stroke="#666" stroke-width="2.8" />
<circle cx="1711.5" cy="2855" r="10" fill="#5bc8d4"/>
<rect x="1707.5" y="2864" width="8" height="8" fill="#666" />
<path d="M405,2895 Q405,2890 412,2890 Q419,2890 419,2895 L419,2925 L405,2925 Z M424,2892 Q424,2887 431,2887 Q438,2887 438,2892 L438,2920 L424,2920 Z" fill="#bdbdbd" stroke="#aaa" stroke-width="2"/>
<path d="M411,2911 Q411,2906 420,2906 Q428,2906 428,2911 L428,2933 L411,2933 Z" fill="#a8a8a8"/>
<path d="M1041,2915 L1050,2923 L1059,2915" fill="none" stroke="#bbb" stroke-width="4"/>
<path d="M1116,2892.5 L1138,2892.5 L1138,2906 L1128,2906 L1123,2912 L1123,2906 L1116,2906 Z" fill="none" stroke="#999" stroke-width="2.5"/>
<path d="M1103,2933 L1103,2922 L1108,2922 Q1104,2917 1104,2912 Q1104,2907 1110,2907 Q1116,2907 1116,2912 Q1116,2917 1112,2922 L1117,2922 L1117,2933" fill="none" stroke="#aaa" stroke-width="2.5"/>
<text x="1145" y="2934" font-size="30" fill="#9ab0c8" text-anchor="start" font-weight="normal" >:0</text>
<rect x="1248.5" y="2893.5" width="44" height="42" fill="#f2f2f2" stroke="#666" stroke-width="3" />
<rect x="1248" y="2893" width="45" height="8" fill="#666" />
<rect x="1253" y="2906" width="6" height="6" fill="#666" />
<rect x="1262" y="2907.5" width="26" height="3" fill="#666" />
<rect x="1253" y="2915" width="6" height="6" fill="#666" />
<rect x="1262" y="2916.5" width="26" height="3" fill="#666" />
<rect x="1253" y="2924" width="6" height="6" fill="#666" />
<rect x="1262" y="2925.5" width="26" height="3" fill="#666" />
<rect x="1325.5" y="2893.5" width="43" height="42" fill="#f2f2f2" stroke="#999" stroke-width="3" />
<rect x="1325" y="2893" width="44" height="8" fill="#999" />
<rect x="1330" y="2906" width="6" height="6" fill="#999" />
<rect x="1339" y="2907.5" width="26" height="3" fill="#999" />
<rect x="1330" y="2914" width="6" height="6" fill="#999" />
<rect x="1339" y="2915.5" width="26" height="3" fill="#999" />
<rect x="1330" y="2923" width="6" height="6" fill="#999" />
<rect x="1339" y="2924.5" width="26" height="3" fill="#999" />
<path d="M1962,2918 L1975,2927 L1988,2918" fill="none" stroke="#c8c8c8" stroke-width="4"/>
<rect x="2661" y="2898" width="22" height="14" rx="7" fill="none" stroke="#e8813a" stroke-width="3"/><rect x="2676" y="2898" width="22" height="14" rx="7" fill="none" stroke="#e8813a" stroke-width="3"/>
<path d="M2678,2906 L2678,2936 L2685,2930 L2690,2939 L2695,2937 L2690,2928 L2699,2928 Z" fill="#fff" stroke="#222" stroke-width="2.2"/>
<path d="M2738,2912 L2760,2893 L2764,2912 Z M2738,2929 L2760,2912 L2764,2929 Z" fill="#5aa7e0"/>
<path d="M2763,2893 L2778,2908 M2778,2893 L2763,2908" stroke="#f02020" stroke-width="4.5"/>
<path d="M2756,2906 L2756,2936 L2763,2930 L2768,2939 L2773,2937 L2768,2928 L2777,2928 Z" fill="#fff" stroke="#222" stroke-width="2.2"/>
<path d="M2818,2895 L2837,2895 L2837,2903 L2833,2903 L2833,2915 L2841,2922 L2816,2922 L2822,2915 L2822,2903 L2818,2903 Z" fill="none" stroke="#777" stroke-width="2.5"/>
<path d="M2833,2906 L2833,2936 L2840,2930 L2845,2939 L2850,2937 L2845,2928 L2854,2928 Z" fill="#fff" stroke="#222" stroke-width="2.2"/>
<path d="M2892,2933 L2892,2906 L2905,2896 L2915,2896 L2915,2933 Z" fill="#5aa7e0"/>
<path d="M2916,2893 L2931,2908 M2931,2893 L2916,2908" stroke="#f02020" stroke-width="4.5"/>
<path d="M2910,2906 L2910,2936 L2917,2930 L2922,2939 L2927,2937 L2922,2928 L2931,2928 Z" fill="#fff" stroke="#222" stroke-width="2.2"/>
<rect x="2901" y="561" width="53" height="53" rx="20" fill="#ebebeb" stroke="#a8a8a8" stroke-width="3"/>
<circle cx="2926.5" cy="588" r="13" fill="#e4e4ea" stroke="#9a9a9a" stroke-width="2.5"/><path d="M2917,597 L2906,608" stroke="#9a9a9a" stroke-width="2.5"/>
<rect x="2934" y="600" width="30" height="26" fill="#f2f2f2" />
<text x="2934" y="625" font-size="27" fill="#5a8fd0" text-anchor="start" font-weight="normal" textLength="32" lengthAdjust="spacingAndGlyphs">2D</text>
<rect x="2911" y="692" width="32" height="31" fill="#b8d8a8" stroke="#8abf78" stroke-width="2" />
<circle cx="2942" cy="723" r="9" fill="#eef2f4" stroke="#999" stroke-width="3"/><path d="M2948,730 L2957,739" stroke="#999" stroke-width="3.5"/>
<circle cx="2962" cy="518" r="9" fill="none" stroke="#aaa" stroke-width="4"/><circle cx="2962" cy="818" r="9" fill="none" stroke="#aaa" stroke-width="4"/>
<rect x="2964" y="0" width="20" height="2933" fill="#fafafa" />
</svg>
</body></html>
